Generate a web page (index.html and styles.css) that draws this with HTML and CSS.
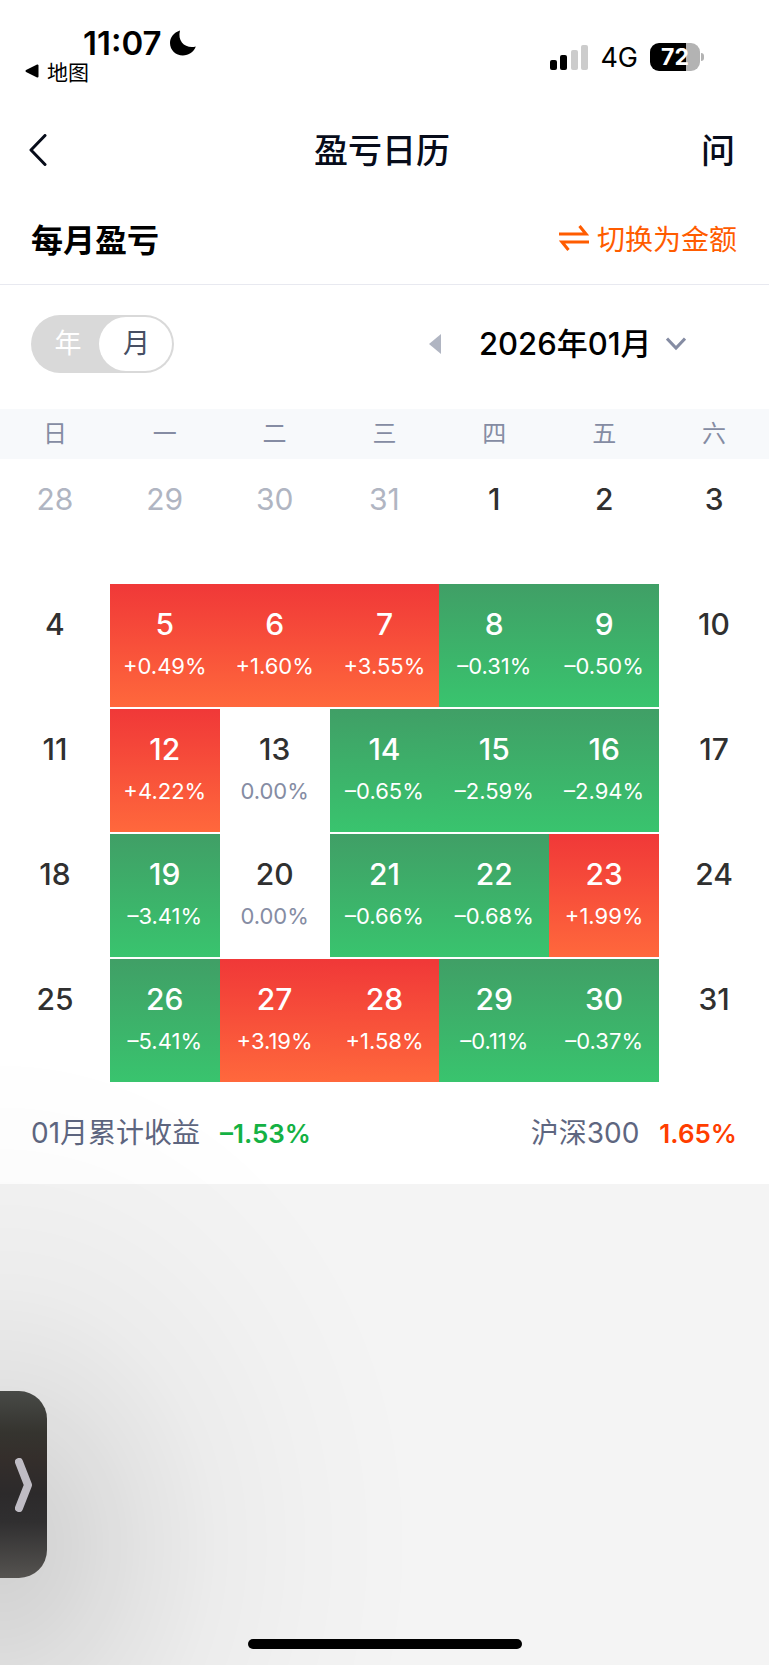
FILE: index.html
```html
<!DOCTYPE html>
<html lang="zh-CN">
<head>
    <meta charset="UTF-8">
    <meta name="viewport" content="width=device-width, initial-scale=1.0">
    <title>盈亏日历</title>
    <link rel="stylesheet" href="styles.css">
</head>
<body>
    <div class="panel">
        <div class="status-bar">
            <div class="status-left">
                <div class="status-time">
                    <span>11:07</span>
                    <svg width="26" height="26" viewBox="0 0 26 26"><path d="M10 0.5C3.500 2.500 0 7.500 0 13c0 7 5.800 12.500 12.800 12.500 6 0 11-3.500 13-9C16 19 7 12 10 0.500z"/></svg>
                </div>
                <a class="status-back" href="#">
                    <svg width="14" height="14" viewBox="0 0 14 14"><path d="M12.500 1.500v11L1.500 7z" stroke="#000" stroke-width="2" stroke-linejoin="round"/></svg>
                    地图
                </a>
            </div>
            <div class="status-right">
                <svg width="38" height="25" viewBox="0 0 38 25">
                    <rect x="0" y="15" width="7" height="10" rx="2"/>
                    <rect x="10" y="10" width="7" height="15" rx="2"/>
                    <rect x="21" y="5" width="7" height="20" rx="2" fill="#ccc"/>
                    <rect x="31" y="0" width="7" height="25" rx="2" fill="#ccc"/>
                </svg>
                <span class="network">4G</span>
                <div class="battery"><span>72</span></div>
            </div>
        </div>

        <header class="nav">
            <button class="nav-back" aria-label="返回">
                <svg width="18" height="32" viewBox="0 0 18 32"><path d="M16 1.500L2 16l14 14.500" fill="none" stroke="#070c1a" stroke-width="3" stroke-linecap="round" stroke-linejoin="round"/></svg>
            </button>
            <h1>盈亏日历</h1>
            <button class="nav-ask">问</button>
        </header>

        <div class="section-head">
            <h2>每月盈亏</h2>
            <button class="switch-btn">
                <svg width="30" height="26" viewBox="0 0 30 26"><path d="M0 9h27L20.500 1M30 17H3l6.500 8" fill="none" stroke="#ff5c00" stroke-width="3"/></svg>
                切换为金额
            </button>
        </div>

        <div class="controls">
            <div class="toggle">
                <input type="radio" name="range" id="rangeYear">
                <label for="rangeYear">年</label>
                <input type="radio" name="range" id="rangeMonth" checked>
                <label for="rangeMonth">月</label>
            </div>
            <div class="month-picker">
                <button class="prev" aria-label="上个月">
                    <svg width="12" height="20" viewBox="0 0 12 20"><path d="M12 0v20L0 10z" fill="#b0b5c2"/></svg>
                </button>
                <div class="month-select">
                    <select aria-label="月份">
                        <option selected>2026年01月</option>
                        <option>2025年11月</option>
                    </select>
                    <svg width="20" height="14" viewBox="0 0 20 14"><path d="M1 1.500l9 9.500 9-9.500" fill="none" stroke="#858ca3" stroke-width="3"/></svg>
                </div>
            </div>
        </div>

        <table class="calendar">
            <thead>
                <tr><th>日</th><th>一</th><th>二</th><th>三</th><th>四</th><th>五</th><th>六</th></tr>
            </thead>
            <tbody>
                <tr>
                    <td class="other">28</td>
                    <td class="other">29</td>
                    <td class="other">30</td>
                    <td class="other">31</td>
                    <td>1</td>
                    <td>2</td>
                    <td>3</td>
                </tr>
                <tr>
                    <td>4</td>
                    <td class="up">5<span>+0.49%</span></td>
                    <td class="up">6<span>+1.60%</span></td>
                    <td class="up">7<span>+3.55%</span></td>
                    <td class="down">8<span>–0.31%</span></td>
                    <td class="down">9<span>–0.50%</span></td>
                    <td>10</td>
                </tr>
                <tr>
                    <td>11</td>
                    <td class="up">12<span>+4.22%</span></td>
                    <td>13<span>0.00%</span></td>
                    <td class="down">14<span>–0.65%</span></td>
                    <td class="down">15<span>–2.59%</span></td>
                    <td class="down">16<span>–2.94%</span></td>
                    <td>17</td>
                </tr>
                <tr>
                    <td>18</td>
                    <td class="down">19<span>–3.41%</span></td>
                    <td>20<span>0.00%</span></td>
                    <td class="down">21<span>–0.66%</span></td>
                    <td class="down">22<span>–0.68%</span></td>
                    <td class="up">23<span>+1.99%</span></td>
                    <td>24</td>
                </tr>
                <tr>
                    <td>25</td>
                    <td class="down">26<span>–5.41%</span></td>
                    <td class="up">27<span>+3.19%</span></td>
                    <td class="up">28<span>+1.58%</span></td>
                    <td class="down">29<span>–0.11%</span></td>
                    <td class="down">30<span>–0.37%</span></td>
                    <td>31</td>
                </tr>
            </tbody>
        </table>

        <div class="summary">
            <div>01月累计收益 <strong class="text-down">–1.53%</strong></div>
            <div>沪深300 <strong class="text-up">1.65%</strong></div>
        </div>
    </div>

    <div class="shade"></div>
    <button class="drawer" aria-label="展开">
        <svg width="18" height="54" viewBox="0 0 18 54"><path d="M4 4l9 23-9 23" fill="none" stroke="#bfbcc4" stroke-width="8" stroke-linecap="round" stroke-linejoin="round"/></svg>
    </button>
    <div class="home-indicator"></div>
</body>
</html>
```

FILE: styles.css
```css
* {
    box-sizing: border-box;
}

body {
    margin: 0;
    min-height: 100vh;
    background-color: #f4f4f4;
    color: #000;
    font-family: Inter, "Noto Sans CJK SC", sans-serif;
}

button {
    padding: 0;
    border: none;
    background: none;
    font-family: inherit;
    cursor: pointer;
}

svg {
    display: block;
    flex-shrink: 0;
}

h1,
h2 {
    margin: 0;
    font-weight: 500;
}

.panel {
    background-color: #fff;
}

/* status bar */
.status-bar {
    display: flex;
    justify-content: space-between;
    height: 100px;
    padding: 26px 69px 0 25px;
}

.status-time {
    display: flex;
    align-items: center;
    gap: 8px;
    height: 34px;
    padding-left: 58px;
    font-size: 33px;
    font-weight: 600;
}

.status-back {
    display: flex;
    align-items: center;
    gap: 8px;
    height: 22px;
    color: #000;
    font-size: 21px;
    text-decoration: none;
}

.status-right {
    display: flex;
    align-items: center;
    height: 62px;
}

.network {
    margin: 0 12px;
    font-size: 27px;
}

.battery {
    position: relative;
    width: 50px;
    height: 28px;
    border-radius: 9px;
    background: linear-gradient(to right, #000 72%, #b3b3b3 72%);
    color: #fff;
    font-size: 23px;
    font-weight: 700;
    line-height: 28px;
    text-align: center;
}

.battery::after {
    content: "";
    position: absolute;
    top: 10px;
    right: -4px;
    width: 3px;
    height: 8px;
    border-radius: 0 3px 3px 0;
    background: #b3b3b3;
}

/* title bar */
.nav {
    display: flex;
    align-items: center;
    justify-content: space-between;
    height: 100px;
    padding: 0 34px 0 29px;
    color: #070c1a;
}

.nav h1 {
    padding-bottom: 4px;
    font-size: 34px;
}

.nav-back,
.nav-ask {
    display: flex;
    width: 36px;
    color: #070c1a;
}

.nav-ask {
    justify-content: flex-end;
    padding-bottom: 4px;
    font-size: 34px;
    font-weight: 500;
}

.section-head {
    display: flex;
    align-items: center;
    justify-content: space-between;
    height: 85px;
    padding: 0 32px 8px 31px;
    border-bottom: 1px solid #e8e9f0;
}

.section-head h2 {
    font-size: 32px;
    font-weight: 700;
}

.switch-btn {
    display: flex;
    align-items: center;
    gap: 8px;
    color: #ff5c00;
    font-size: 28px;
}

.controls {
    display: flex;
    justify-content: space-between;
    align-items: center;
    height: 124px;
    padding: 0 83px 6px 31px;
}

/* year / month toggle */
.toggle {
    display: flex;
    width: 143px;
    height: 58px;
    padding: 2px;
    border-radius: 29px;
    background-color: #d9d9d9;
}

.toggle input {
    position: absolute;
    opacity: 0;
}

.toggle label {
    flex: 1;
    padding-left: 4px;
    border-radius: 27px;
    color: #fff;
    font-size: 27px;
    line-height: 54px;
    text-align: center;
    cursor: pointer;
}

.toggle input:checked + label {
    flex: 0 0 73px;
    padding-left: 2px;
    background-color: #fff;
    color: #474f63;
}

.month-picker {
    display: flex;
    align-items: center;
    gap: 38px;
}

.month-select {
    display: flex;
    align-items: center;
    gap: 14px;
}

.month-select select {
    appearance: none;
    padding: 0 0 2px;
    border: none;
    background: none;
    color: #000;
    font-family: inherit;
    font-size: 31px;
    font-weight: 500;
}

/* calendar */
.calendar {
    width: 100%;
    table-layout: fixed;
    border-collapse: separate;
    border-spacing: 0;
}

.calendar th {
    height: 50px;
    padding: 0;
    background-color: #f7f9fb;
    color: #858ca3;
    font-size: 24px;
    font-weight: 400;
    line-height: 50px;
}

.calendar td {
    height: 125px;
    padding: 22px 0 0;
    border-bottom: 2px solid #fff;
    background-clip: padding-box;
    color: #303030;
    font-size: 30px;
    font-weight: 500;
    line-height: 36px;
    text-align: center;
    vertical-align: top;
}

.calendar td span {
    display: block;
    margin-top: 8px;
    color: #858ca3;
    font-size: 22px;
    font-weight: 400;
    line-height: 32px;
}

.calendar .other {
    color: #b0b5c2;
    font-weight: 400;
}

.calendar .up,
.calendar .down {
    background-image: linear-gradient(#f03838, #ff683c);
    color: #fff;
}

.calendar .down {
    background-image: linear-gradient(#409f66, #39c46e);
}

.calendar .up span,
.calendar .down span {
    color: #fff;
}

.summary {
    display: flex;
    align-items: center;
    justify-content: space-between;
    height: 100px;
    padding: 0 32px 6px 31px;
    color: #5e6680;
    font-size: 28px;
}

.summary strong {
    margin-left: 12px;
    font-size: 26px;
    font-weight: 600;
}

.text-down {
    color: #14b143;
}

.text-up {
    color: #ff3d00;
}

/* floating side drawer */
.shade {
    position: fixed;
    left: 0;
    bottom: 0;
    width: 420px;
    height: 620px;
    background: radial-gradient(420px 500px at 0 500px, rgba(0, 0, 0, 0.15), rgba(0, 0, 0, 0.11) 18%, rgba(0, 0, 0, 0.065) 34%, rgba(0, 0, 0, 0.03) 52%, rgba(0, 0, 0, 0.01) 75%, transparent);
    pointer-events: none;
}

.drawer {
    position: fixed;
    left: 0;
    bottom: 87px;
    display: flex;
    align-items: center;
    width: 47px;
    height: 187px;
    padding-left: 15px;
    border-radius: 0 28px 28px 0;
    background: linear-gradient(#484a47, #35342f 22%, #342e2b 36%, #2c2a2b 55%, #302f30 70%, #555350);
}

.home-indicator {
    position: fixed;
    left: 50%;
    bottom: 16px;
    width: 274px;
    height: 10px;
    border-radius: 5px;
    background-color: #000;
    transform: translateX(-50%);
}
```
